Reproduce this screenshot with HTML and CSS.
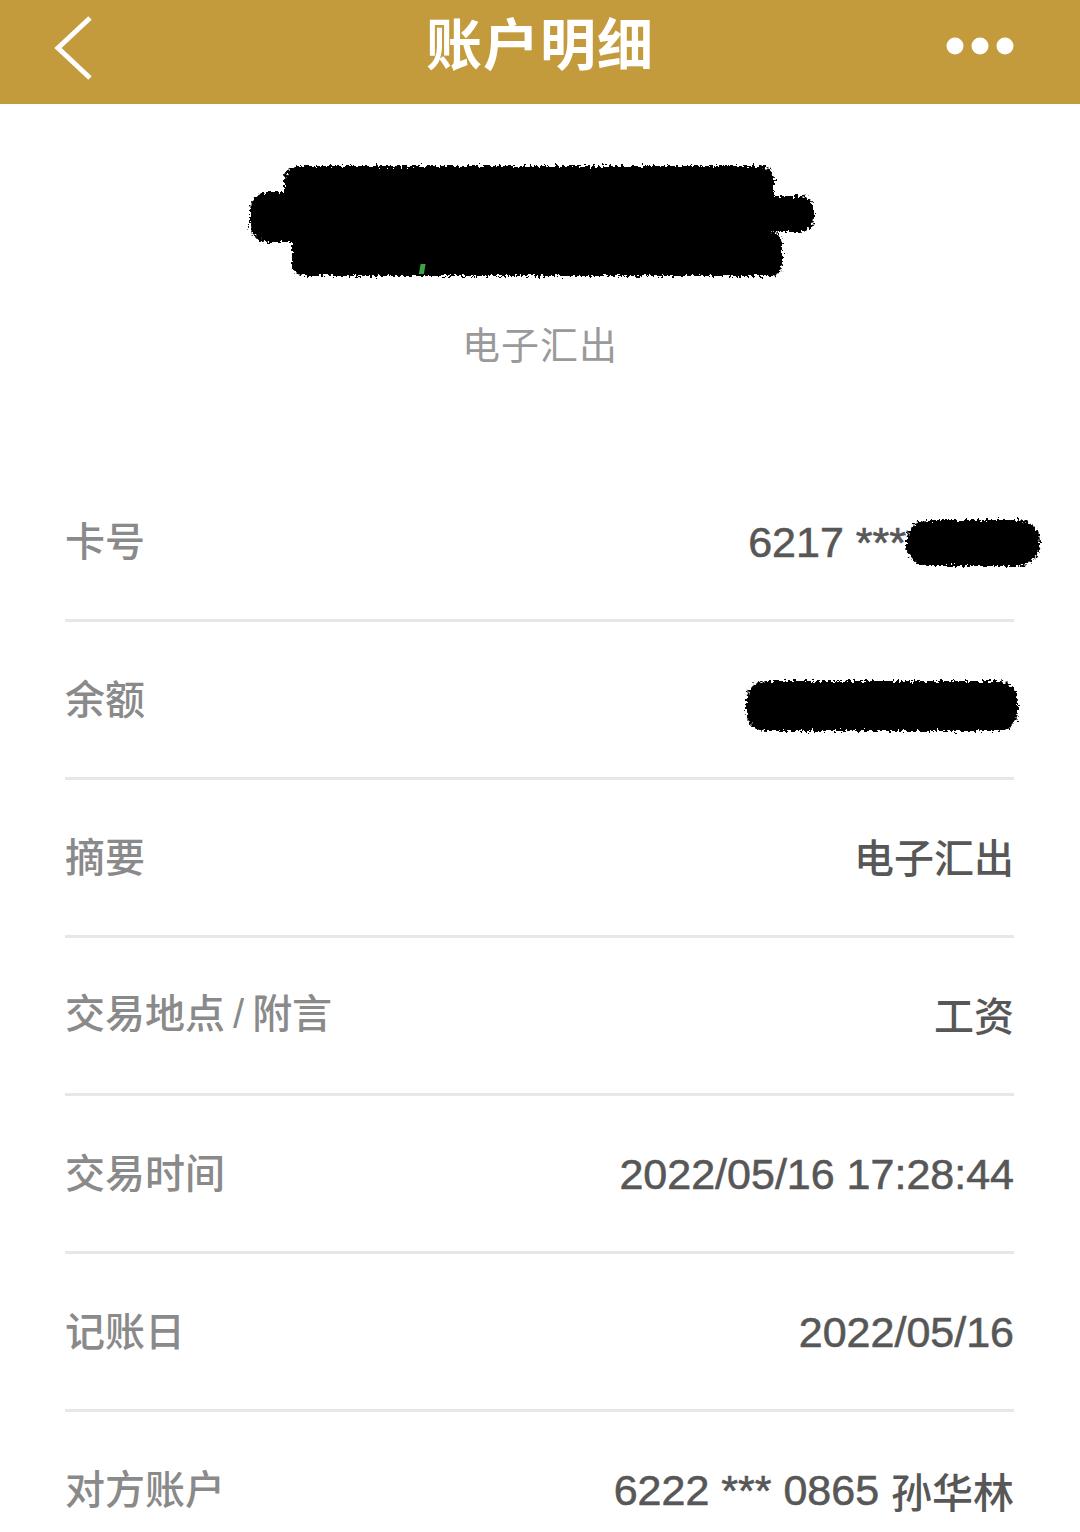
FILE: index.html
```html
<!DOCTYPE html>
<html lang="zh-CN">
<head>
<meta charset="utf-8">
<title>账户明细</title>
<link rel="stylesheet" href="styles.css">
</head>
<body>
<svg class="defs" width="0" height="0" aria-hidden="true">
  <defs>
    <filter id="rough" x="-10%" y="-30%" width="120%" height="160%">
      <feTurbulence type="fractalNoise" baseFrequency="0.35" numOctaves="2" seed="3" result="n"/>
      <feDisplacementMap in="SourceGraphic" in2="n" scale="9" xChannelSelector="R" yChannelSelector="G"/>
    </filter>
  </defs>
</svg>
<header class="nav">
  <svg class="back" width="40" height="66" viewBox="0 0 40 66">
    <polyline points="36,3 4,33 36,63" fill="none" stroke="#fff" stroke-width="5" stroke-linejoin="miter"/>
  </svg>
  <h1 class="title">账户明细</h1>
  <svg class="more" width="70" height="20" viewBox="0 0 70 20">
    <circle cx="9" cy="10" r="8.5" fill="#fff"/>
    <circle cx="34" cy="10" r="8.5" fill="#fff"/>
    <circle cx="59" cy="10" r="8.5" fill="#fff"/>
  </svg>
</header>

<section class="summary">
  <svg class="redact-top" width="580" height="130" viewBox="0 0 580 130">
    <g filter="url(#rough)" fill="#000">
      <rect x="40" y="12" width="490" height="70" rx="14"/>
      <rect x="6" y="38" width="150" height="50" rx="18"/>
      <rect x="470" y="42" width="100" height="36" rx="14"/>
      <rect x="48" y="78" width="490" height="44" rx="12"/>
    </g>
    <rect x="196" y="110" width="5" height="10" fill="#3aa544" transform="skewX(-10)"/>
  </svg>
  <p class="type">电子汇出</p>
</section>

<main class="list">
  <div class="row">
    <span class="label">卡号</span>
    <span class="value">6217 ***<svg class="redact-card" width="146" height="58" viewBox="0 0 146 58"><g filter="url(#rough)"><rect x="6" y="6" width="134" height="46" rx="22" fill="#000"/></g></svg></span>
  </div>
  <div class="row">
    <span class="label">余额</span>
    <span class="value"><svg class="redact-bal" width="286" height="66" viewBox="0 0 286 66"><g filter="url(#rough)"><rect x="6" y="8" width="272" height="50" rx="20" fill="#000"/></g></svg></span>
  </div>
  <div class="row">
    <span class="label">摘要</span>
    <span class="value cjk">电子汇出</span>
  </div>
  <div class="row">
    <span class="label">交易地点<span class="slash">/</span>附言</span>
    <span class="value cjk">工资</span>
  </div>
  <div class="row">
    <span class="label">交易时间</span>
    <span class="value">2022/05/16 17:28:44</span>
  </div>
  <div class="row">
    <span class="label">记账日</span>
    <span class="value">2022/05/16</span>
  </div>
  <div class="row last">
    <span class="label">对方账户</span>
    <span class="value">6222 *** 0865 <span class="name">孙华林</span></span>
  </div>
</main>
</body>
</html>
```

FILE: styles.css
```css
html, body {
  margin: 0;
  padding: 0;
  background: #ffffff;
}
body {
  width: 1080px;
  height: 1532px;
  overflow: hidden;
  font-family: "Liberation Sans", "Noto Sans CJK SC", sans-serif;
}
.defs {
  position: absolute;
  width: 0;
  height: 0;
}
.nav {
  height: 104px;
  background: #c39b3d;
  display: flex;
  align-items: center;
  justify-content: space-between;
  padding: 0 64px 0 54px;
  box-sizing: border-box;
  position: relative;
}
.back {
  display: block;
  margin-top: -9px;
}
.title {
  position: absolute;
  left: 0;
  right: 0;
  top: 0;
  margin: 0;
  text-align: center;
  line-height: 82px;
  font-family: "Noto Sans CJK SC", sans-serif;
  font-weight: 700;
  font-size: 56px;
  color: #ffffff;
  letter-spacing: 1px;
  pointer-events: none;
}
.more {
  display: block;
  margin-top: -12px;
}
.summary {
  height: 360px;
  display: flex;
  flex-direction: column;
  align-items: center;
  box-sizing: border-box;
  padding-top: 50px;
}
.redact-top {
  display: block;
  margin-left: -12px;
}
.type {
  margin: 31px 0 0 0;
  font-family: "Noto Sans CJK SC", sans-serif;
  font-size: 38px;
  line-height: 56px;
  color: #9a9a9a;
  letter-spacing: 1px;
}
.list {
  padding: 0 66px 0 65px;
}
.row {
  height: 155px;
  border-bottom: 3px solid #e7e7e7;
  display: flex;
  align-items: center;
  justify-content: space-between;
}
.row.last {
  border-bottom: none;
}
.label {
  font-family: "Noto Sans CJK SC", sans-serif;
  font-weight: 500;
  font-size: 40px;
  color: #8a8a8a;
  line-height: 50px;
  margin-top: -6px;
}
.slash {
  font-family: "Liberation Sans", sans-serif;
  margin: 0 8px;
}
.value {
  font-family: "Liberation Sans", "Noto Sans CJK SC", sans-serif;
  font-size: 43px;
  color: #575757;
  line-height: 50px;
  display: flex;
  align-items: center;
  white-space: pre;
  -webkit-text-stroke: 0.6px #575757;
}
.value.cjk {
  font-family: "Noto Sans CJK SC", sans-serif;
  font-size: 40px;
  font-weight: 500;
  -webkit-text-stroke: 0;
  margin-top: -4px;
}
.name {
  font-family: "Noto Sans CJK SC", sans-serif;
  font-size: 41px;
  font-weight: 500;
  -webkit-text-stroke: 0;
}
.redact-card {
  display: block;
  margin-left: -6px;
  margin-right: -32px;
  margin-top: 2px;
}
.redact-bal {
  display: block;
  margin-right: -12px;
  margin-top: 12px;
}
```
